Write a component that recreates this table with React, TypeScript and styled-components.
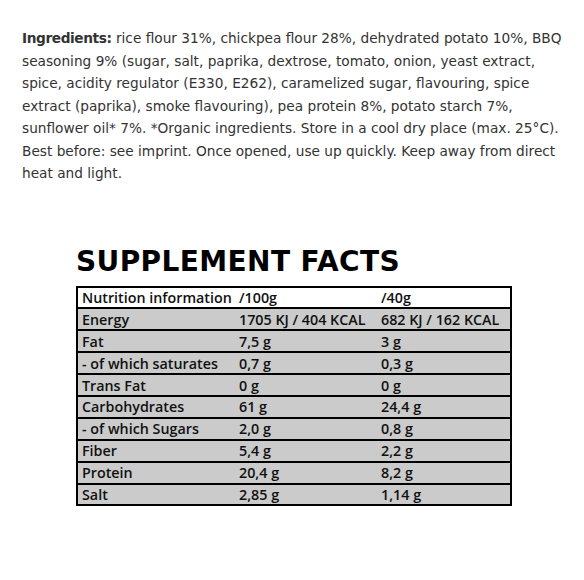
import styled, { createGlobalStyle } from "styled-components";

const GlobalStyle = createGlobalStyle`
  html, body {
    margin: 0;
    padding: 0;
    background: #ffffff;
  }
  * {
    box-sizing: border-box;
  }
`;

type Row = {
  label: string;
  per100: string;
  perServing: string;
};

const rows: Row[] = [
  { label: "Energy", per100: "1705 KJ / 404 KCAL", perServing: "682 KJ / 162 KCAL" },
  { label: "Fat", per100: "7,5 g", perServing: "3 g" },
  { label: "- of which saturates", per100: "0,7 g", perServing: "0,3 g" },
  { label: "Trans Fat", per100: "0 g", perServing: "0 g" },
  { label: "Carbohydrates", per100: "61 g", perServing: "24,4 g" },
  { label: "- of which Sugars", per100: "2,0 g", perServing: "0,8 g" },
  { label: "Fiber", per100: "5,4 g", perServing: "2,2 g" },
  { label: "Protein", per100: "20,4 g", perServing: "8,2 g" },
  { label: "Salt", per100: "2,85 g", perServing: "1,14 g" },
];

const ingredientLines = [
  "rice flour 31%, chickpea flour 28%, dehydrated potato 10%, BBQ",
  "seasoning 9% (sugar, salt, paprika, dextrose, tomato, onion, yeast extract,",
  "spice, acidity regulator (E330, E262), caramelized sugar, flavouring, spice",
  "extract (paprika), smoke flavouring), pea protein 8%, potato starch 7%,",
  "sunflower oil* 7%. *Organic ingredients. Store in a cool dry place (max. 25°C).",
  "Best before: see imprint. Once opened, use up quickly. Keep away from direct",
  "heat and light.",
];

function App() {
  return (
    <Page>
      <GlobalStyle />
      <Ingredients>
        <strong>Ingredients:</strong>{" "}
        {ingredientLines.map((line, i) => (
          <span key={i}>
            {line}
            {i < ingredientLines.length - 1 && <br />}
          </span>
        ))}
      </Ingredients>

      <Facts>
        <Title>SUPPLEMENT FACTS</Title>
        <Table>
          <tbody>
            <TableRow $head>
              <LabelCell>Nutrition information</LabelCell>
              <ValueCell>/100g</ValueCell>
              <ValueCell>/40g</ValueCell>
            </TableRow>
            {rows.map((row) => (
              <TableRow key={row.label}>
                <LabelCell>{row.label}</LabelCell>
                <ValueCell>{row.per100}</ValueCell>
                <ValueCell>{row.perServing}</ValueCell>
              </TableRow>
            ))}
          </tbody>
        </Table>
      </Facts>
    </Page>
  );
}

export default App;

const Page = styled.main`
  width: 584px;
  min-height: 580px;
  padding: 27px 8px 0 22px;
  font-family: "DejaVu Sans", "Liberation Sans", sans-serif;
  color: #333333;
`;

const Ingredients = styled.p`
  margin: 0;
  font-size: 13.7px;
  line-height: 22.5px;
  white-space: nowrap;

  strong {
    font-weight: 700;
    letter-spacing: -0.4px;
  }
`;

const Facts = styled.section`
  width: 436px;
  margin: 63px 0 0 54px;
`;

const Title = styled.h2`
  margin: 0 0 10px;
  font-size: 28px;
  line-height: 28px;
  font-weight: 800;
  color: #000000;
  letter-spacing: 0.4px;
`;

const Table = styled.table`
  width: 100%;
  border-collapse: collapse;
  border: 2px solid #000000;
  font-family: "Open Sans", "DejaVu Sans", sans-serif;
`;

const TableRow = styled.tr<{ $head?: boolean }>`
  height: 21.9px;
  background: ${({ $head }) => ($head ? "#ffffff" : "#cbcbcb")};
  border-bottom: 2px solid #000000;
`;

const LabelCell = styled.td`
  width: 162px;
  padding: 0 0 0 4px;
  font-size: 14.3px;
  font-weight: 600;
  color: #111111;
  white-space: nowrap;
`;

const ValueCell = styled.td`
  padding: 0;
  font-size: 14.3px;
  font-weight: 600;
  color: #111111;
  white-space: nowrap;

  & + & {
    width: 130px;
  }
`;
